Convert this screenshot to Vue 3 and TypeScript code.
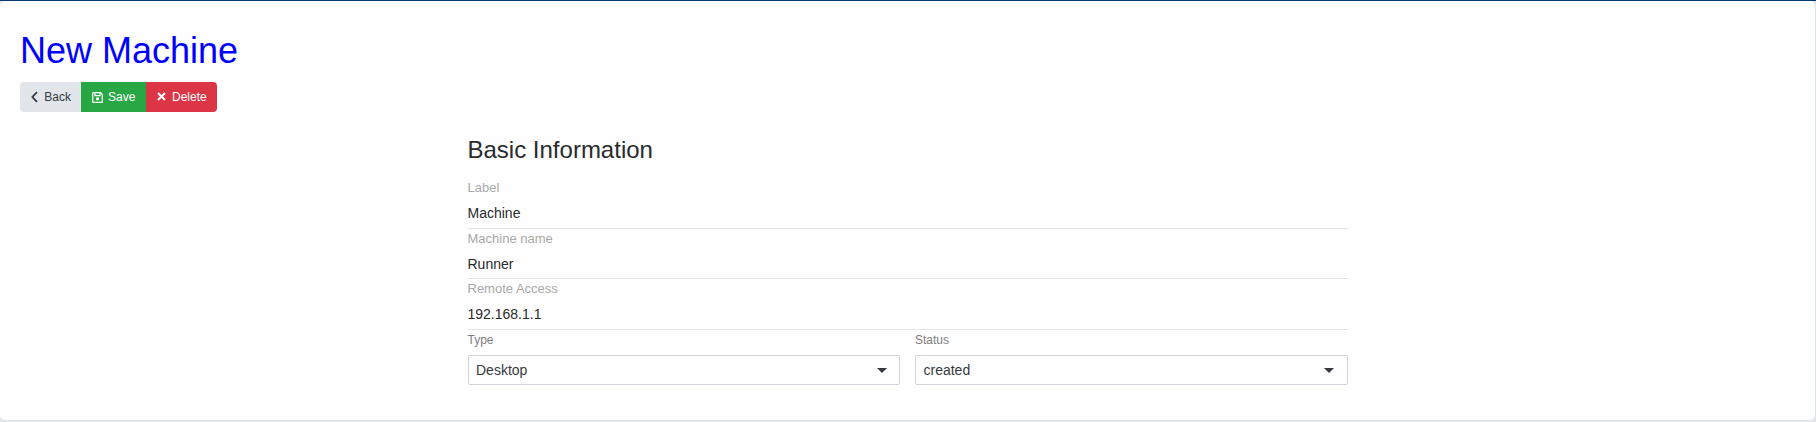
<script setup lang="ts">
interface Field {
  id: string
  label: string
  value: string
}

const fields: Field[] = [
  { id: 'label', label: 'Label', value: 'Machine' },
  { id: 'name', label: 'Machine name', value: 'Runner' },
  { id: 'remote', label: 'Remote Access', value: '192.168.1.1' },
]

const selects: Field[] = [
  { id: 'type', label: 'Type', value: 'Desktop' },
  { id: 'status', label: 'Status', value: 'created' },
]
</script>

<template>
  <div class="page">
    <main class="card">
      <h1 class="title">New Machine</h1>
      <div class="toolbar">
        <button class="btn back" type="button">
          <svg class="icon chevron" width="7" height="12" viewBox="0 0 7 12">
            <path d="M6 1.2L1.4 6L6 10.8" fill="none" stroke="currentColor" stroke-width="1.8" />
          </svg>
          <span>Back</span>
        </button>
        <button class="btn save" type="button">
          <svg class="icon disk" width="11" height="11" viewBox="0 0 11 11" fill="none" stroke="currentColor">
            <path d="M1.3 .7H8.6L10.3 2.4V9.7Q10.3 10.3 9.7 10.3H1.3Q.7 10.3 .7 9.7V1.3Q.7 .7 1.3 .7Z" stroke-width="1.3" />
            <path d="M3 1V3.7H8V1" stroke-width="1.2" />
            <circle cx="5.5" cy="6.8" r="1.6" fill="currentColor" stroke="none" />
          </svg>
          <span>Save</span>
        </button>
        <button class="btn delete" type="button">
          <svg class="icon cross" width="9" height="9" viewBox="0 0 9 9">
            <path d="M1 1L8 8M8 1L1 8" fill="none" stroke="currentColor" stroke-width="2" />
          </svg>
          <span>Delete</span>
        </button>
      </div>

      <section class="form">
        <h2 class="heading">Basic Information</h2>
        <div v-for="field in fields" :key="field.id" class="field">
          <div class="label">{{ field.label }}</div>
          <div class="value">{{ field.value }}</div>
        </div>
        <div class="selects">
          <div v-for="item in selects" :key="item.id" class="select-field">
            <div class="select-label">{{ item.label }}</div>
            <div class="select">
              <span>{{ item.value }}</span>
              <svg width="10" height="5" viewBox="0 0 10 5">
                <path d="M0 0H10L5 5Z" fill="#343a40" />
              </svg>
            </div>
          </div>
        </div>
      </section>
    </main>
  </div>
</template>

<style>
body {
  margin: 0;
  overflow: hidden;
}
</style>

<style scoped>
.page {
  box-sizing: border-box;
  height: 422px;
  border-top: 1px solid #0c3a6f;
  padding: 0 1px 2px 0;
  background: #e1e5ea;
  font-family: "Liberation Sans", Arial, sans-serif;
  color: #292b2c;
}

.card {
  box-sizing: border-box;
  height: 419px;
  padding: 28px 20px 0;
  border-radius: 5px;
  background: #fefefe;
}

.title {
  margin: 0;
  font-size: 36px;
  font-weight: 400;
  line-height: 43px;
  color: #00f;
}

.toolbar {
  display: flex;
  width: 197px;
  height: 30px;
  margin-top: 10px;
  border-radius: 4px;
  overflow: hidden;
}

.btn {
  display: flex;
  align-items: center;
  box-sizing: border-box;
  height: 30px;
  margin: 0;
  padding: 0 0 0 11px;
  border: 0;
  font: 12px/18px "Liberation Sans", Arial, sans-serif;
  color: #fff;
}

.icon {
  flex: none;
}

.back {
  width: 61px;
  padding-left: 10.5px;
  background: #e2e6ea;
  color: #343a40;
}

.chevron {
  margin-right: 6.8px;
  margin-top: -1px;
}

.save {
  width: 65px;
  background: #28a745;
}

.disk {
  margin-right: 5px;
}

.delete {
  width: 71px;
  background: #dc3545;
}

.cross {
  margin-right: 6px;
  margin-top: -1px;
}

.form {
  width: 880px;
  margin: 23px auto 0 447.5px;
}

.heading {
  margin: 0 0 14px;
  font-size: 24px;
  font-weight: 400;
  line-height: 29px;
}

.field {
  box-sizing: border-box;
  height: 51px;
  padding-top: 0.5px;
  border-bottom: 1px solid #e5e6e8;
}

.field:nth-of-type(2) {
  height: 50px;
}

.label {
  font-size: 13px;
  line-height: 18px;
  color: #a9a9a9;
}

.value {
  margin-top: 6px;
  font-size: 14px;
  line-height: 21px;
}

.selects {
  display: grid;
  grid-template-columns: 1fr 1fr;
  gap: 15px;
}

.select-label {
  padding-top: 1px;
  font-size: 12px;
  line-height: 18px;
  color: #808080;
}

.select {
  display: flex;
  align-items: center;
  justify-content: space-between;
  box-sizing: border-box;
  height: 30px;
  margin-top: 6px;
  padding: 0 12.5px 0 7.5px;
  border: 1px solid #ced4da;
  border-radius: 2px;
  font-size: 14px;
  line-height: 21px;
  color: #343a40;
}
</style>
